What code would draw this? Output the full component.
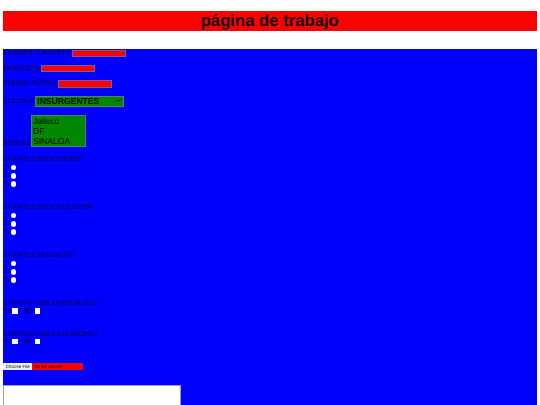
<style>
:global(body) { margin: 0; background: #fff; overflow: hidden; }
.page { height: 405px; padding: 11px 3.4px 0; box-sizing: border-box; overflow: hidden; font-family: "Liberation Serif", serif; font-size: 6.75px; color: #000; filter: blur(0.5px); text-rendering: geometricPrecision; }
h1 { margin: 0 0 18.5px; height: 19.5px; background: #f00; text-align: center; font: bold 16.7px/19.5px "Liberation Sans", sans-serif; }
form { background: #00f; height: 356px; overflow: hidden; display: flex; flex-direction: column; align-items: flex-start; }
.row { display: flex; align-items: center; white-space: nowrap; height: 8px; }
.in { width: 54px; height: 7.4px; box-sizing: border-box; background: #f00; border: 0.7px solid #7a5a9a; margin-left: -0.4px; }
.r1 { margin-top: 1px; }
.r2 { margin-top: 7.7px; }
.r3 { margin-top: 8.2px; height: 11px; }
.sel { width: 89px; height: 11px; box-sizing: border-box; background: #080; border: 0.5px solid #5a7a7a; font: bold 8.6px/10px "Liberation Sans", sans-serif; padding-left: 1px; display: flex; justify-content: space-between; align-items: center; margin-left: -0.4px; }
.sel svg { width: 5px; height: 4px; margin-right: 2px; }
.estado { margin-top: 8px; height: 32px; align-items: flex-end; }
.list { width: 55px; height: 32px; box-sizing: border-box; background: #080; border: 0.5px solid #5a7a7a; font: 8.6px/10.3px "Liberation Sans", sans-serif; padding-left: 1px; margin-left: -0.4px; }
.q { height: 8.3px; line-height: 10px; white-space: nowrap; }
.first { margin-top: 8.3px; }
.opts { display: flex; flex-direction: column; margin-bottom: 14.9px; }
.o { display: flex; align-items: center; height: 8.3px; }
.o span { width: 7.4px; }
.dot { width: 5.5px; height: 5.5px; border-radius: 50%; background: #fff; }
.check { display: flex; align-items: center; height: 8px; margin-bottom: 15.4px; }
.box { width: 5.4px; height: 5.4px; background: #fff; margin: 0 4.6px 0 2.8px; }
.last { margin-bottom: 17.6px; }
.file { display: flex; width: 80px; height: 7.2px; font: 4.5px/7.2px "Liberation Sans", sans-serif; background: #f00; }
.btn { width: 28.8px; background: #efefef; text-align: center; }
.nofile { padding-left: 2px; }
.ta { margin-top: 15.3px; width: 177.5px; height: 40px; box-sizing: border-box; background: #fff; border: 0.5px solid #9a9ae0; flex: none; }
</style>

<div class="page">
  <h1>página de trabajo</h1>
  <form>
    <div class="row r1">NOMBRE COMPLETO:<div class="in"></div></div>
    <div class="row r2">DOMICILIO:<div class="in"></div></div>
    <div class="row r2">CODIGO POSTAL:<div class="in"></div></div>
    <div class="row r3">COLONIA:<div class="sel">INSURGENTES<svg viewBox="0 0 10 8"><path d="M1 1l4 4 4-4" fill="none" stroke="#000" stroke-width="2"/></svg></div></div>
    <div class="row estado">ESTADO:<div class="list">Jalisco<br>DF<br>SINALOA</div></div>
    <div class="q first">CUANTOS HIJOS TIENES?</div>
    <div class="opts">
      <div class="o"><span>1</span><div class="dot"></div></div>
      <div class="o"><span>2</span><div class="dot"></div></div>
      <div class="o"><span>3</span><div class="dot"></div></div>
    </div>
    <div class="q">CUANTOS HIJOS ESTUDIAN?</div>
    <div class="opts">
      <div class="o"><span>1</span><div class="dot"></div></div>
      <div class="o"><span>2</span><div class="dot"></div></div>
      <div class="o"><span>3</span><div class="dot"></div></div>
    </div>
    <div class="q">CUANTOS TRABAJAN?</div>
    <div class="opts">
      <div class="o"><span>1</span><div class="dot"></div></div>
      <div class="o"><span>2</span><div class="dot"></div></div>
      <div class="o"><span>3</span><div class="dot"></div></div>
    </div>
    <div class="q">CUENTAS CON AUNTOMOVIL?</div>
    <div class="check">SI<div class="box"></div>NO<div class="box"></div></div>
    <div class="q">CUENTAS CON CASA PROPIA?</div>
    <div class="check last">SI<div class="box"></div>NO<div class="box"></div></div>
    <div class="file"><div class="btn">Choose File</div><div class="nofile">No file chosen</div></div>
    <div class="ta"></div>
  </form>
</div>
